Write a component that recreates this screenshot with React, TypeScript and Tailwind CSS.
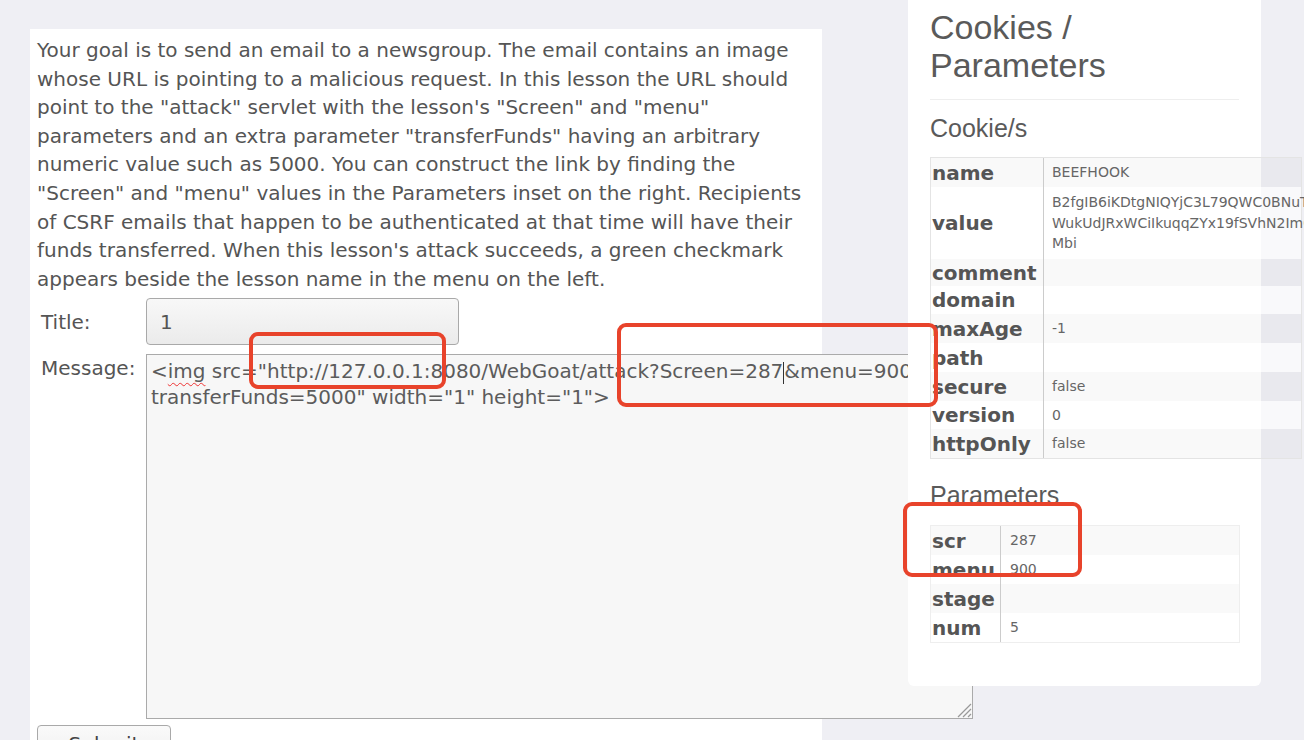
const cookieRows = [
  { label: "name", value: ["BEEFHOOK"], h: "h-[29px]", odd: true },
  {
    label: "value",
    value: [
      "B2fgIB6iKDtgNIQYjC3L79QWC0BNuTx4",
      "WukUdJRxWCiIkuqqZYx19fSVhN2ImQz8",
      "Mbi",
    ],
    h: "h-[72px]",
    odd: false,
  },
  { label: "comment", value: [""], h: "h-[27px]", odd: true },
  { label: "domain", value: [""], h: "h-[28px]", odd: false },
  { label: "maxAge", value: ["-1"], h: "h-[29px]", odd: true },
  { label: "path", value: [""], h: "h-[29px]", odd: false },
  { label: "secure", value: ["false"], h: "h-[29px]", odd: true },
  { label: "version", value: ["0"], h: "h-[28px]", odd: false },
  { label: "httpOnly", value: ["false"], h: "h-[29px]", odd: true },
];

const paramRows = [
  { label: "scr", value: "287", odd: true },
  { label: "menu", value: "900", odd: false },
  { label: "stage", value: "", odd: true },
  { label: "num", value: "5", odd: false },
];

function ResizeGrip() {
  return (
    <svg
      className="absolute bottom-0 right-0"
      width="18"
      height="18"
      viewBox="0 0 18 18"
    >
      <path d="M17 4L4 17M17 9L9 17M17 14L14 17" stroke="#999" strokeWidth="1.2" />
    </svg>
  );
}

export default function App() {
  return (
    <div className="relative h-[740px] w-[1304px] overflow-hidden bg-[#efeff4] font-['DejaVu_Sans',sans-serif] text-[#555]">
      <div className="flex items-start">
        {/* ================= Lesson ================= */}
        <div className="ml-[30px] mt-[29px] h-[711px] w-[792px] shrink-0 bg-white px-[7px] pt-[7px]">
          <p className="w-[778px] text-[20px] leading-[28.6px]">
            Your goal is to send an email to a newsgroup. The email contains an
            image whose URL is pointing to a malicious request. In this lesson
            the URL should point to the "attack" servlet with the lesson's
            "Screen" and "menu" parameters and an extra parameter
            "transferFunds" having an arbitrary numeric value such as 5000. You
            can construct the link by finding the "Screen" and "menu" values in
            the Parameters inset on the right. Recipients of CSRF emails that
            happen to be authenticated at that time will have their funds
            transferred. When this lesson's attack succeeds, a green checkmark
            appears beside the lesson name in the menu on the left.
          </p>

          <div className="mt-[5px] flex items-center">
            <span className="w-[109px] shrink-0 pl-[4px] text-[20px]">Title:</span>
            <div className="flex h-[47px] w-[313px] shrink-0 items-center rounded-[4px] border border-[#a9a9a9] bg-gradient-to-b from-[#f8f8f8] to-[#ebebeb] px-[13px] text-[20px]">
              1
            </div>
          </div>

          <div className="mt-[9px] flex items-start">
            <span className="w-[109px] shrink-0 pl-[4px] pt-[1px] text-[20px] leading-[26px]">
              Message:
            </span>
            <div className="relative h-[365px] w-[827px] shrink-0 border border-[#aaa] bg-[#f7f7f7] px-[4px] pt-[3px] text-[20px] leading-[26px] whitespace-nowrap text-[#5c5c5c]">
              <div>
                &lt;
                <span className="underline decoration-wavy decoration-[#e33] decoration-1 underline-offset-[4px]">
                  img
                </span>{" "}
                src="http://127.0.0.1:8080/WebGoat/attack?Screen=287
                <span className="inline-block h-[22px] w-0 border-l border-[#333] align-middle" />
                &amp;menu=900&amp;
              </div>
              <div>transferFunds=5000" width="1" height="1"&gt;</div>
              <ResizeGrip />
            </div>
          </div>

          <button
            type="button"
            className="mt-[6px] flex h-[46px] w-[134px] items-start justify-center rounded-[4px] border border-[#a9a9a9] bg-gradient-to-b from-[#fafafa] to-[#ececec] pt-[3px] text-[20px] text-[#444]"
          >
            Submit
          </button>
        </div>

        {/* ================= Cookies / Parameters ================= */}
        <div className="relative z-10 ml-[86px] h-[686px] w-[353px] shrink-0 rounded-b-[6px] bg-white px-[22px] pt-[8px] font-['Liberation_Sans',sans-serif]">
          <h2 className="text-[34px] leading-[38px] text-[#5a5a5a]">
            Cookies /<br />
            Parameters
          </h2>
          <hr className="mt-[15px] border-[#eee]" />
          <h3 className="mt-[13px] text-[25px] leading-[30px] text-[#5a5a5a]">
            Cookie/s
          </h3>

          <div className="mt-[14px] w-[372px] border border-[#e4e4e4] font-['DejaVu_Sans',sans-serif]">
            {cookieRows.map((row) => (
              <div
                key={row.label}
                className={`flex ${row.h} ${
                  row.odd ? "bg-black/[0.025]" : "bg-white/60"
                }`}
              >
                <div className="flex w-[113px] shrink-0 items-center border-r border-[#ccc] pl-[1px] text-[20px] font-bold text-[#555]">
                  {row.label}
                </div>
                <div className="flex items-center whitespace-nowrap pl-[8px] text-[14px] leading-[20.5px] text-[#666]">
                  <div>
                    {row.value.map((line, i) => (
                      <div key={i}>{line}</div>
                    ))}
                  </div>
                </div>
              </div>
            ))}
          </div>

          <h3 className="mt-[21px] text-[25px] leading-[30px] text-[#5a5a5a]">
            Parameters
          </h3>
          <div className="mt-[15px] w-[310px] border border-[#eee] font-['DejaVu_Sans',sans-serif]">
            {paramRows.map((row) => (
              <div
                key={row.label}
                className={`flex h-[29px] ${row.odd ? "bg-[#f9f9f9]" : "bg-white"}`}
              >
                <div className="flex w-[70px] shrink-0 items-center border-r border-[#ccc] pl-[1px] text-[20px] font-bold text-[#555]">
                  {row.label}
                </div>
                <div className="flex items-center pl-[9px] text-[14px] text-[#666]">
                  {row.value}
                </div>
              </div>
            ))}
          </div>
        </div>
      </div>

      {/* ================= Annotation boxes ================= */}
      <div className="pointer-events-none absolute left-[249px] top-[332px] z-20 h-[57px] w-[197px] rounded-[9px] border-[4px] border-[#e8432b]" />
      <div className="pointer-events-none absolute left-[617px] top-[323px] z-20 h-[84px] w-[321px] rounded-[9px] border-[4px] border-[#e8432b]" />
      <div className="pointer-events-none absolute left-[903px] top-[502px] z-20 h-[75px] w-[179px] rounded-[9px] border-[4px] border-[#e8432b]" />
    </div>
  );
}
